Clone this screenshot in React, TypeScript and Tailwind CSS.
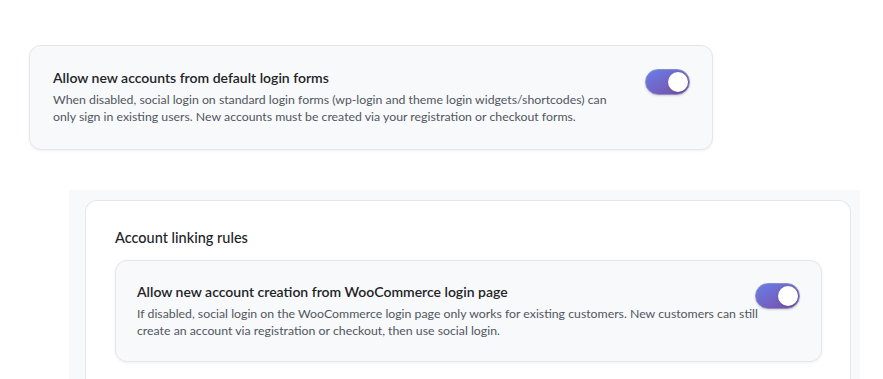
import React, { useState } from 'react';

interface ToggleProps {
  checked: boolean;
  onChange: (v: boolean) => void;
}

const Toggle: React.FC<ToggleProps> = ({ checked, onChange }) => (
  <button
    type="button"
    onClick={() => onChange(!checked)}
    className={`relative shrink-0 mt-[1px] w-[45px] h-[26px] rounded-full border border-[#8a8fc9] shadow-[0_1px_2px_rgba(0,0,0,0.15)] ${
      checked ? 'bg-gradient-to-br from-[#667eea] to-[#764ba2]' : 'bg-[#c3c4c7]'
    }`}
  >
    <span
      className={`absolute top-[2px] h-[20px] w-[20px] rounded-full bg-white shadow ${
        checked ? 'left-[22px]' : 'left-[2px]'
      }`}
    />
  </button>
);

interface SettingRowProps {
  title: string;
  description: string;
  checked: boolean;
  onChange: (v: boolean) => void;
  className?: string;
  textClassName?: string;
}

const SettingRow: React.FC<SettingRowProps> = ({ title, description, checked, onChange, className, textClassName }) => (
  <div
    className={`flex items-start justify-between rounded-xl border border-[#e3e6ec] bg-[#f8f9fb] shadow-[0_1px_3px_rgba(0,0,0,0.06)] ${className ?? ''}`}
  >
    <div className={`flex-1 ${textClassName ?? ''}`}>
      <h3 className="text-[14px] font-semibold leading-[20px] text-[#1d2327]">{title}</h3>
      <p className="mt-[3px] text-[12.3px] leading-[17px] text-[#50575e]">{description}</p>
    </div>
    <Toggle checked={checked} onChange={onChange} />
  </div>
);

export default function App() {
  const [allowDefault, setAllowDefault] = useState(true);
  const [allowWoo, setAllowWoo] = useState(true);

  return (
    <div className="h-[379px] bg-white font-['Lato',sans-serif] overflow-hidden">
      <div className="pl-[29px] pt-[45px] w-[713px]">
        <SettingRow
          className="gap-[24px] pl-[23px] pr-[22px] pt-[22px] pb-[24px]"
          title="Allow new accounts from default login forms"
          description="When disabled, social login on standard login forms (wp-login and theme login widgets/shortcodes) can only sign in existing users. New accounts must be created via your registration or checkout forms."
          checked={allowDefault}
          onChange={setAllowDefault}
        />
      </div>

      <div className="ml-[69px] mt-[40px] w-[791px] bg-[#f8f9fb] pt-[10px] pl-[16px] pr-[9px] h-[200px]">
        <div className="rounded-t-xl border border-b-0 border-[#e3e6ec] bg-white pl-[29px] pr-[28px] pt-[27px] h-full">
          <h2 className="text-[14.5px] font-medium leading-[20px] text-[#1d2327]">Account linking rules</h2>
          <SettingRow
            className="mt-[12px] pl-[21px] pr-[21px] pt-[21px] pb-[22px]"
            textClassName="-mr-[14px]"
            title="Allow new account creation from WooCommerce login page"
            description="If disabled, social login on the WooCommerce login page only works for existing customers. New customers can still create an account via registration or checkout, then use social login."
            checked={allowWoo}
            onChange={setAllowWoo}
          />
        </div>
      </div>
    </div>
  );
}
